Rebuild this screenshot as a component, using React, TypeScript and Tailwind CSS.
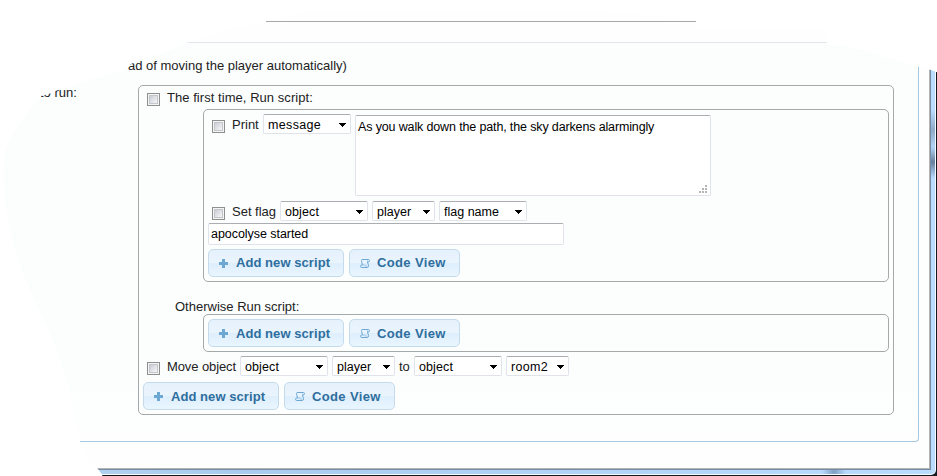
import type { ReactNode } from "react";

function Check({ className = "" }: { className?: string }) {
  return (
    <span className={`block size-[13px] shrink-0 border border-[#8e8f8f] bg-[#f4f4f4] p-px ${className}`}>
      <span className="block size-[9px] border border-[#c3c6cb] bg-linear-to-br from-[#c9ced6] to-[#f6f6f6]" />
    </span>
  );
}

function Label({ children, className = "" }: { children: ReactNode; className?: string }) {
  return <span className={`block shrink-0 text-[13px] leading-[20px] text-[#222] ${className}`}>{children}</span>;
}

function Select({ children, className = "" }: { children: ReactNode; className?: string }) {
  return (
    <span
      className={`flex h-[20px] shrink-0 items-center justify-between rounded-[2px] border border-[#e1e3eb] border-t-[#abadb3] bg-white pr-[4px] pl-[4px] text-[12.5px] leading-[18px] text-black ${className}`}
    >
      <span className="pt-[2px]">{children}</span>
      <svg width="7" height="4" viewBox="0 0 7 4" className="mt-px" shapeRendering="crispEdges">
        <path d="M0 0h7v1h-1v1h-1v1h-1v1h-1v-1h-1v-1h-1v-1h-1z" fill="#000" />
      </svg>
    </span>
  );
}

const buttonClass =
  "flex h-[28px] shrink-0 items-center rounded-[5px] border border-[#c5dbec] bg-linear-to-b from-[#e6f2fd] from-0% via-[#e9f4fd] via-50% to-[#e9f5fe] text-[13px] leading-[26px] font-bold text-[#2e6e9e]";

const sheenClass = "bg-[linear-gradient(to_bottom,#e5f1fc_0%,#eaf4fd_50%,#deeefc_52%,#e9f6ff_100%)]";

function Buttons({ className = "", textClass = "" }: { className?: string; textClass?: string }) {
  return (
    <div className={`flex gap-[5px] ${className}`}>
      <button className={`${buttonClass} ${sheenClass} w-[136px] pl-[10px]`}>
        <svg width="9" height="9" viewBox="0 0 9 9" className="mt-px mr-[8px]" shapeRendering="crispEdges">
          <path d="M3 0h3v3h3v3H6v3H3V6H0V3h3z" fill="#6da8d5" />
        </svg>
        <span className={`tracking-[0.06px] ${textClass}`}>Add new script</span>
      </button>
      <button className={`${buttonClass} ${sheenClass} w-[111px] pl-[10px]`}>
        <svg width="10" height="9" viewBox="0 0 10 9" className="mt-px mr-[7px]" fill="none" stroke="#6da8d5">
          <path d="M2 .5h6.2q1.3 0 1.3 1.2T8.2 3H7.5L8.5 6.5q.2 2-1.5 2H1.8Q.5 8.500.5 7.300T1.800 6H2.500L1.600 2.500Q1.300 1 2 .5Z" />
          <path d="M7.500 3V1.500M2.500 6H5.500Q6.500 6.500 6 8" strokeOpacity="0.6" />
        </svg>
        <span className={`tracking-[0.36px] ${textClass}`}>Code View</span>
      </button>
    </div>
  );
}

export default function App() {
  return (
    <div
      className="relative h-[476px] w-[937px] overflow-hidden bg-[#15181d] whitespace-nowrap"
      style={{ fontFamily: '"Liberation Sans", Arial, sans-serif' }}
    >
      {/* Glass window frame: dark edge, highlight, blue body */}
      <div className="h-[475px] w-[936px] rounded-br-[5px] bg-[#f4faff] pr-px pb-px">
        <div className="h-[474px] w-[935px] rounded-br-[4px] bg-linear-to-r from-[#b5d3f1] via-[#a9ccee] via-25% to-[#b9dcff] pr-[4px] pb-[4px]">
          <div className="h-[470px] w-[931px] border-r border-b border-[#748ca6] bg-white">
            <div className="flex h-[469px] w-[930px] flex-col border-r border-b border-[#b3b3b3] bg-[#fefefe]">
              <div className="mt-[21px] ml-[200px] h-px w-[496px] shrink-0 bg-[#a6a9a9]" />
              <div className="mt-[20px] flex h-[400px] w-[919px] flex-col rounded-b-[4px] border-r border-b border-[#a6c9e2] bg-linear-to-b from-[#fcfefe] from-85% to-[#fefefe]">
                <div className="h-px w-[827px] shrink-0 bg-[#e3e5ef]" />
                <Label className="mt-[13px] ml-[128px]">ad of moving the player automatically)</Label>
                <div className="mt-[9px] flex">
                  <Label className="-mt-[2px] w-[138px] pl-[40px]">to run:</Label>
                  <div className="h-[330px] w-[756px] rounded-[5px] border border-[#a6a9a9]">
                    <div className="flex h-[23px] pl-[8px]">
                      <Check className="mt-[7px]" />
                      <Label className="mt-[2px] ml-[7px] tracking-[0.05px]">The first time, Run script:</Label>
                    </div>
                    <div className="ml-[64px] h-[173px] w-[686px] rounded-[5px] border border-[#a6a9a9] pl-[4px]">
                      <div className="flex h-[91px] pt-[4px] pl-[4px]">
                        <Check className="mt-[6px]" />
                        <Label className="mt-px ml-[7px] w-[31px]">Print</Label>
                        <Select className="w-[88px] tracking-[0.35px]">message</Select>
                        <div className="relative mt-px ml-[4px] h-[81px] w-[356px] rounded-[2px] border border-[#e1e3eb] border-t-[#abadb3] bg-white pt-[2px] pl-[2px] text-[12.5px] leading-[18px] tracking-[-0.14px] text-black">
                          As you walk down the path, the sky darkens alarmingly
                          <svg width="8" height="8" className="absolute right-[3px] bottom-[2px]" shapeRendering="crispEdges">
                            <path d="M6 0h2v2h-2zM3 3h2v2h-2zM6 3h2v2h-2zM0 6h2v2h-2zM3 6h2v2h-2zM6 6h2v2h-2z" fill="#b5b5b5" />
                          </svg>
                        </div>
                      </div>
                      <div className="flex h-[22px] pl-[4px]">
                        <Check className="mt-[6px]" />
                        <Label className="mt-px ml-[7px] w-[48px]">Set flag</Label>
                        <Select className="w-[88px] tracking-[0.1px]">object</Select>
                        <Select className="ml-[4px] w-[63px]">player</Select>
                        <Select className="ml-[4px] w-[88px]">flag name</Select>
                      </div>
                      <div className="h-[22px] w-[356px] rounded-[2px] border border-[#e1e3eb] border-t-[#abadb3] bg-white pl-[2px] text-[12.5px] leading-[20px] tracking-[-0.05px] text-black">
                        apocolyse started
                      </div>
                      <Buttons className="mt-[4px]" />
                    </div>
                    <Label className="mt-[15px] ml-[36px] h-[17px]">Otherwise Run script:</Label>
                    <div className="ml-[64px] h-[38px] w-[686px] rounded-[5px] border border-[#a6a9a9] pt-[4px] pl-[4px]">
                      <Buttons textClass="pt-[2px]" />
                    </div>
                    <div className="mt-[4px] flex h-[26px] pl-[8px]">
                      <Check className="mt-[6px]" />
                      <Label className="mt-px ml-[7px] w-[73px] tracking-[-0.1px]">Move object</Label>
                      <Select className="w-[88px] tracking-[0.1px]">object</Select>
                      <Select className="ml-[4px] w-[63px]">player</Select>
                      <Label className="mt-px ml-[4px] w-[15px]">to</Label>
                      <Select className="w-[88px] tracking-[0.1px]">object</Select>
                      <Select className="ml-[4px] w-[63px] tracking-[0.3px]">room2</Select>
                    </div>
                    <Buttons className="ml-[4px]" textClass="pt-[2px]" />
                  </div>
                </div>
              </div>
            </div>
          </div>
        </div>
      </div>

      {/* Reflections on the right and bottom glass edges */}
      <div className="absolute top-[110px] left-[931px] h-[40px] w-[4px] bg-linear-to-b from-transparent via-[#8fabc8] to-transparent" />
      <div className="absolute top-[146px] left-[931px] h-[32px] w-[4px] bg-linear-to-b from-transparent via-[#66809c] to-transparent" />
      <div className="absolute top-[470px] left-[822px] h-[4px] w-[24px] bg-linear-to-r from-transparent via-[#7e9fc2] to-transparent" />

      {/* Irregular white vignette around the window */}
      <svg className="absolute inset-0" width="937" height="476" viewBox="0 0 937 476">
        <defs>
          <filter id="soft" x="-5%" y="-5%" width="110%" height="110%">
            <feGaussianBlur stdDeviation="0.4" />
          </filter>
        </defs>
        <path
          d="M-5 -5H942V74L928 69Q896 61 868 51Q840 44 827 44V30H696V20Q660 15 600 12H310L266 20V22Q225 29 186 43Q165 53 138 60L128 66Q126 70 118 72Q85 80 58 90Q50 94 41 96Q16 123 5 150Q-4 215 34 300Q60 350 72 400Q76 425 80 442L90 462Q99 467 105 481H-5Z"
          fill="#fff"
          filter="url(#soft)"
        />
      </svg>
    </div>
  );
}
